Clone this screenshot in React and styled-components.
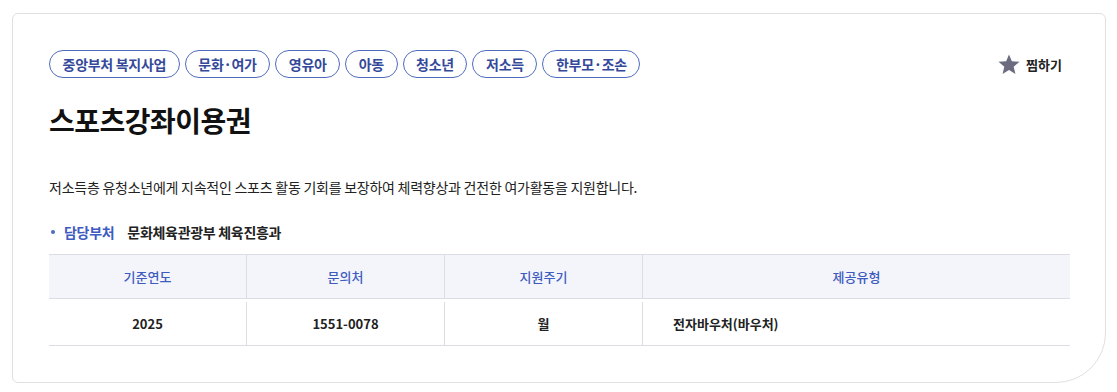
import React from "react";
import styled, { createGlobalStyle } from "styled-components";

const Global = createGlobalStyle`
  html, body { margin: 0; padding: 0; background: #fff; }
  body { font-family: "Noto Sans CJK KR", "Noto Sans", sans-serif; color: #222; }
  * { box-sizing: border-box; }
`;

const Card = styled.section`
  margin: 13px 0 0 12px;
  width: 1094px;
  height: 370px;
  border: 1px solid #e0e0e0;
  border-radius: 6px 6px 50px 6px;
  padding: 36px 35px 0 36px;
  background: #fff;
`;

const TopRow = styled.div`
  display: flex;
  align-items: center;
  justify-content: space-between;
`;

const Tags = styled.ul`
  display: flex;
  gap: 5px;
  margin: 0;
  padding: 0;
  list-style: none;
`;

const Tag = styled.li`
  height: 28px;
  padding: 0 12.6px;
  border: 1px solid #4f6bc0;
  border-radius: 14px;
  display: flex;
  align-items: center;
  font-size: 14px;
  font-weight: 700;
  color: #34499a;
  letter-spacing: -0.3px;
`;

const Fav = styled.button`
  display: flex;
  align-items: center;
  gap: 6px;
  border: 0;
  background: none;
  padding: 0;
  margin-right: 8px;
  font-family: inherit;
  font-size: 13px;
  font-weight: 700;
  color: #222;
  cursor: pointer;
`;

const Title = styled.h1`
  margin: 22px 0 0;
  font-size: 28px;
  line-height: 40px;
  font-weight: 700;
  color: #111;
  letter-spacing: -0.5px;
`;

const Desc = styled.p`
  margin: 36px 0 0;
  font-size: 14px;
  line-height: 22px;
  color: #222;
  letter-spacing: -0.25px;
`;

const Dept = styled.div`
  margin-top: 23px;
  display: flex;
  align-items: center;
  font-size: 14px;
  line-height: 22px;
  font-weight: 700;
  letter-spacing: -0.3px;
`;

const Bullet = styled.span`
  width: 4px;
  height: 4px;
  border-radius: 50%;
  background: #4f6bc0;
  margin: 0 9px 0 2px;
`;

const DeptLabel = styled.span`
  color: #3e5bbf;
  margin-right: 13px;
`;

const DeptValue = styled.span`
  color: #222;
`;

const Table = styled.div`
  margin-top: 11px;
  display: grid;
  grid-template-columns: 198px 198px 198px 1fr;
  border-top: 1px solid #dcdde3;
  border-bottom: 1px solid #dcdde3;
`;

const Head = styled.div`
  height: 44px;
  background: #f4f5fa;
  display: flex;
  align-items: center;
  justify-content: center;
  font-size: 13px;
  font-weight: 500;
  color: #3e5bbf;
  border-bottom: 1px solid #dcdde3;
  border-right: ${(p) => (p.$last ? "none" : "1px solid #dcdde3")};
`;

const CellWrap = styled.div`
  padding-top: 3px;
`;

const Cell = styled.div`
  height: 43px;
  display: flex;
  align-items: center;
  justify-content: ${(p) => (p.$left ? "flex-start" : "center")};
  padding-left: ${(p) => (p.$left ? "30px" : "0")};
  font-size: 13px;
  font-weight: 700;
  color: #222;
  border-right: ${(p) => (p.$last ? "none" : "1px solid #dcdde3")};
`;

const Star = () => (
  <svg width="22" height="21" viewBox="0 0 24 23" aria-hidden="true">
    <path
      d="M12 0.5 L15.1 8 L23.5 8.6 L17.1 13.9 L19.1 22 L12 17.6 L4.9 22 L6.9 13.9 L0.5 8.6 L8.9 8 Z"
      fill="#6c6c80"
    />
  </svg>
);

const tags = ["중앙부처 복지사업", "문화·여가", "영유아", "아동", "청소년", "저소득", "한부모·조손"];

export default function App() {
  return (
    <>
      <Global />
      <Card>
        <TopRow>
          <Tags>
            {tags.map((t) => (
              <Tag key={t}>{t}</Tag>
            ))}
          </Tags>
          <Fav type="button">
            <Star />
            찜하기
          </Fav>
        </TopRow>
        <Title>스포츠강좌이용권</Title>
        <Desc>저소득층 유청소년에게 지속적인 스포츠 활동 기회를 보장하여 체력향상과 건전한 여가활동을 지원합니다.</Desc>
        <Dept>
          <Bullet />
          <DeptLabel>담당부처</DeptLabel>
          <DeptValue>문화체육관광부 체육진흥과</DeptValue>
        </Dept>
        <Table>
          <Head>기준연도</Head>
          <Head>문의처</Head>
          <Head>지원주기</Head>
          <Head $last>제공유형</Head>
          <CellWrap><Cell>2025</Cell></CellWrap>
          <CellWrap><Cell>1551-0078</Cell></CellWrap>
          <CellWrap><Cell>월</Cell></CellWrap>
          <CellWrap><Cell $left $last>전자바우처(바우처)</Cell></CellWrap>
        </Table>
      </Card>
    </>
  );
}
